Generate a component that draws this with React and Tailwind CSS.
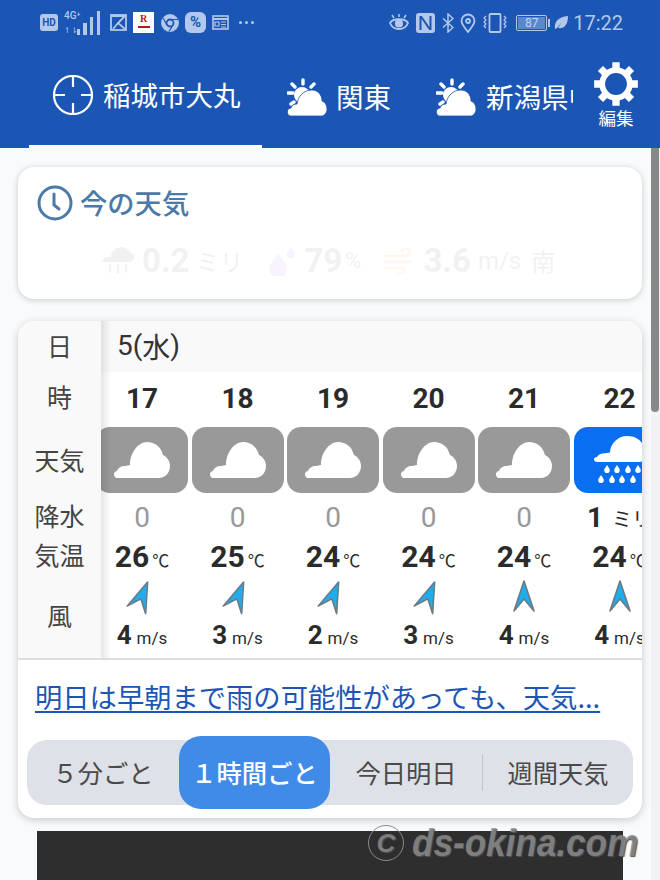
const JP = "font-['Noto_Sans_CJK_JP','Noto_Sans',sans-serif]";

const HOURS = [
  { h: 17, rain: 0, temp: 26, wind: 4, dir: 22 },
  { h: 18, rain: 0, temp: 25, wind: 3, dir: 22 },
  { h: 19, rain: 0, temp: 24, wind: 2, dir: 22 },
  { h: 20, rain: 0, temp: 24, wind: 3, dir: 22 },
  { h: 21, rain: 0, temp: 24, wind: 4, dir: 0 },
  { h: 22, rain: 1, temp: 24, wind: 4, dir: 0, wet: true },
];

const CLOUD_PATH =
  "M4 36a3.500 3.500 0 0 1-1-7c1-3 4-5 8-5l5-1c0-12 8-23 17-23c8 0 14 5 16 13c4 2 7 6 7 11c0 7-5 12-11 12z";

function Crosshair() {
  return (
    <svg width="40" height="40" viewBox="0 0 40 40" fill="none" stroke="white" strokeWidth="2.2" className="shrink-0">
      <circle cx="20" cy="20" r="19" />
      <path d="M20 1v11M20 28v11M1 20h11M28 20h11" />
    </svg>
  );
}

function SunCloud() {
  return (
    <svg width="40" height="38" viewBox="0 0 40 38" fill="white" className="shrink-0">
      <g stroke="white" strokeWidth="3.400" strokeLinecap="round">
        <path d="M16 2v4M5 6l3 3M27 6l-3 3M1 15h5M4 26l3-2" />
      </g>
      <circle cx="15" cy="17" r="8" />
      <path d="M5 38a4 4 0 0 1-1-8c1-3 3-4 6-4c1-8 7-14 15-14c6 0 10 5 10 11c3 1 5 4 5 8c0 4-3 7-5 7z" stroke="#1c56b5" strokeWidth="0.8" />
    </svg>
  );
}

function Gear() {
  return (
    <svg width="46" height="46" viewBox="0 0 24 24" fill="none" className="shrink-0">
      <circle cx="12" cy="12" r="7.200" stroke="white" strokeWidth="3" />
      <g stroke="white" strokeWidth="3.800">
        <path d="M12 .6v4M12 19.400v4M.6 12h4M19.400 12h4M3.900 3.900l2.900 2.900M17.200 17.200l2.900 2.900M20.100 3.900l-2.900 2.900M6.800 17.200l-2.900 2.900" />
      </g>
    </svg>
  );
}

function Cloud() {
  return (
    <svg width="56" height="36" viewBox="0 0 56 36" fill="white" className="shrink-0">
      <path d={CLOUD_PATH} />
    </svg>
  );
}

function RainCloud() {
  return (
    <svg width="56" height="48" viewBox="0 0 56 48" fill="white" className="shrink-0">
      <path d={CLOUD_PATH} transform="scale(1 0.72)" />
      {[13, 23, 34, 44].map((x) => (
        <path key={x} d={`M${x} 29c2 3 2.800 4 2.800 5.200a2.800 2.800 0 0 1-5.600 0c0-1.200.8-2.200 2.800-5.200z`} />
      ))}
      {[7, 18, 28, 39].map((x) => (
        <path key={x} d={`M${x} 39c2 3 2.800 4 2.800 5.200a2.800 2.800 0 0 1-5.600 0c0-1.200.8-2.200 2.800-5.200z`} />
      ))}
    </svg>
  );
}

function WindArrow({ dir }) {
  return (
    <svg width="22" height="32" viewBox="0 0 22 32" className="shrink-0" style={{ transform: `rotate(${dir}deg)` }}>
      <path d="M11 1L21 31L11 19L1 31z" fill="#1eaeee" stroke="#6b7a85" strokeWidth="1.600" strokeLinejoin="round" />
    </svg>
  );
}

function Clock() {
  return (
    <svg width="36" height="36" viewBox="0 0 36 36" fill="none" stroke="#4a7aa8" strokeWidth="3" className="shrink-0" strokeLinecap="round">
      <circle cx="18" cy="18" r="16" />
      <path d="M17 9v11l5 4" />
    </svg>
  );
}

function StatusLeft() {
  const c = "#b3c8ea";
  return (
    <div className="flex items-center">
      <div className="ml-[40px] flex h-[17px] w-[18px] items-center justify-center rounded-[3px] bg-[#b3c8ea] font-['Roboto'] text-[10px] font-bold text-[#1c56b5]">HD</div>
      <div className="ml-[6px] flex w-[14px] flex-col font-['Roboto'] text-[10px] font-medium leading-[10px] text-[#b3c8ea]">
        <span>4G⁺</span>
        <span className="mt-[6px] text-[8px] leading-[8px]">↿⇂</span>
      </div>
      <svg width="24" height="24" viewBox="0 0 24 24" fill={c} className="-ml-[1px]">
        <rect x="0" y="18" width="3" height="6" />
        <rect x="6" y="12" width="4" height="12" />
        <rect x="13" y="6" width="3" height="18" />
        <rect x="20" y="0" width="3" height="24" />
      </svg>
      <svg width="17" height="17" viewBox="0 0 17 17" fill="none" stroke={c} strokeWidth="1.800" className="ml-[9px]">
        <rect x="1" y="1" width="15" height="15" />
        <path d="M2 2h13L8 9l7 6M8 9l-5 6" />
      </svg>
      <div className="ml-[6px] flex h-[21px] w-[21px] flex-col items-center bg-white font-['Liberation_Serif'] text-[10px] font-bold leading-[14px] text-[#b01818]">
        R
        <span className="h-[2px] w-[12px] bg-[#b01818]" />
      </div>
      <svg width="18" height="18" viewBox="0 0 18 18" fill="none" stroke={c} strokeWidth="1.800" className="ml-[7px]">
        <circle cx="9" cy="9" r="8" fill={c} />
        <circle cx="9" cy="9" r="3.500" stroke="#1c56b5" />
        <path d="M9 5.500h8M6 11l-4-7M12 11l-4 6.500" stroke="#1c56b5" strokeWidth="1.200" />
      </svg>
      <div className="ml-[6px] flex h-[21px] w-[21px] items-center justify-center rounded-[6px] bg-[#b3c8ea] font-['Roboto'] text-[15px] font-bold text-[#1c56b5]">%</div>
      <svg width="17" height="15" viewBox="0 0 17 15" fill="none" stroke={c} strokeWidth="1.600" className="ml-[6px]">
        <rect x="1" y="1" width="15" height="13" />
        <path d="M1 4h15" strokeWidth="2" />
        <path d="M3 7h4v4H3zM9 7h5M9 9.500h5M9 12h5" strokeWidth="1.200" />
      </svg>
      <div className="ml-[10px] flex gap-[3px]">
        <span className="h-[3px] w-[3px] rounded-full bg-[#b3c8ea]" />
        <span className="h-[3px] w-[3px] rounded-full bg-[#b3c8ea]" />
        <span className="h-[3px] w-[3px] rounded-full bg-[#b3c8ea]" />
      </div>
    </div>
  );
}

function StatusRight() {
  const c = "#b3c8ea";
  return (
    <div className="flex items-center pr-[37px]">
      <svg width="20" height="18" viewBox="0 0 20 18" fill="none" stroke={c} strokeWidth="1.800">
        <path d="M1 9c3-5 15-5 18 0c-3 8-15 8-18 0z" />
        <circle cx="10" cy="9.500" r="3.200" fill={c} />
        <path d="M3 1l2 3M10 0v3M17 1l-2 3" strokeWidth="1.500" />
      </svg>
      <svg width="19" height="20" viewBox="0 0 19 20" className="ml-[7px]">
        <rect width="19" height="20" rx="3" fill={c} />
        <path d="M4.500 3v14M14.500 3v14M5 3.500l9 13" fill="none" stroke="#1c56b5" strokeWidth="2" />
      </svg>
      <svg width="12" height="20" viewBox="0 0 12 20" fill="none" stroke={c} strokeWidth="1.500" className="ml-[7px]">
        <path d="M1 5.500l10 9L6 19V1l5 4.500L1 14.500" />
      </svg>
      <svg width="16" height="20" viewBox="0 0 16 20" fill="none" stroke={c} strokeWidth="1.800" className="ml-[6px]">
        <path d="M8 19c-4-5-6.500-8-6.500-11a6.500 6.500 0 0 1 13 0c0 3-2.500 6-6.500 11z" />
        <circle cx="8" cy="8" r="2" />
      </svg>
      <svg width="24" height="20" viewBox="0 0 24 20" fill="none" stroke={c} strokeWidth="1.500" className="ml-[7px]">
        <rect x="6.500" y="1" width="11" height="18" rx="1" strokeWidth="1.800" />
        <path d="M3 3l-2 2l2 2l-2 2l2 2l-2 2l2 2M21 3l2 2l-2 2l2 2l-2 2l2 2l-2 2" strokeWidth="1.200" />
      </svg>
      <div className="ml-[9px] flex h-[16px] w-[31px] items-center rounded-[2px] border border-[#b3c8ea] p-[1px]">
        <div className="flex h-full w-full items-center justify-center bg-[#5b87cc] font-['Roboto'] text-[12px] leading-none text-[#c6d6f0]">87</div>
      </div>
      <span className="ml-[1px] h-[8px] w-[2px] bg-[#b3c8ea]" />
      <svg width="14" height="14" viewBox="0 0 14 14" fill={c} className="ml-[4px]">
        <path d="M1 13C0 6 4 1 14 0c0 9-4 13-10 12l4-6l-5 6z" />
      </svg>
      <span className="ml-[5px] font-['Roboto'] text-[20px] leading-none text-[#b3c8ea]">17:22</span>
    </div>
  );
}

function Header() {
  return (
    <div className="flex h-[148px] flex-col bg-[#1c56b5]">
      <div className="flex h-[45px] items-center justify-between">
        <StatusLeft />
        <StatusRight />
      </div>
      <div className="flex flex-1 pl-[29px]">
        <div className={`flex w-[544px] overflow-hidden whitespace-nowrap text-[27.500px] text-white ${JP}`}>
          <div className="flex h-[103px] w-[233px] shrink-0 items-center gap-[10px] border-b-[3px] border-white pl-[24px]">
            <Crosshair />
            <span className="pb-[1px]">稲城市大丸</span>
          </div>
          <div className="flex h-[103px] w-[150px] shrink-0 items-center gap-[9px] pl-[25px]">
            <SunCloud />
            <span>関東</span>
          </div>
          <div className="flex h-[103px] shrink-0 items-center gap-[10px] pl-[24px]">
            <SunCloud />
            <span>新潟県中越</span>
          </div>
        </div>
        <div className="ml-[20px] flex w-[46px] flex-col items-center pt-[16px]">
          <Gear />
          <span className={`mt-[1px] text-[17.500px] leading-[20px] text-white ${JP}`}>編集</span>
        </div>
      </div>
    </div>
  );
}

function NowCard() {
  return (
    <div className="ml-[18px] mr-[9px] mt-[19px] h-[132px] rounded-[16px] bg-white pl-[19px] pt-[18px] shadow-[0_1px_6px_rgba(0,0,0,0.2)]">
      <div className="flex items-center gap-[7px]">
        <Clock />
        <span className={`text-[27.300px] font-medium leading-none text-[#4a7aa8] ${JP}`}>今の天気</span>
      </div>
      <div className="ml-[65px] mt-[15px] flex items-center font-['Roboto'] opacity-[0.05]">
        <svg width="32" height="32" viewBox="0 0 56 48" fill="black" className="mr-[8px]">
          <path d={CLOUD_PATH} transform="scale(1 0.72)" />
          <path d="M14 30v14M28 30v16M42 30v14" stroke="black" strokeWidth="4" />
        </svg>
        <span className="text-[33px] font-bold text-black">0.2</span>
        <span className={`ml-[6px] text-[24px] text-black ${JP}`}>ミリ</span>
        <svg width="30" height="30" viewBox="0 0 30 30" fill="#8a2be2" className="ml-[24px] mr-[7px]">
          <path d="M11 8c6 8 9 11 9 15a9 9 0 0 1-18 0c0-4 3-7 9-15z" />
          <path d="M24 1c3 4 4 5 4 7a4 4 0 0 1-8 0c0-2 1-3 4-7z" />
        </svg>
        <span className="text-[33px] font-bold text-black">79</span>
        <span className="ml-[3px] text-[22px] text-black">%</span>
        <svg width="30" height="26" viewBox="0 0 30 26" fill="none" stroke="#ff9000" strokeWidth="3" className="ml-[23px] mr-[9px]">
          <path d="M0 8h22a4 4 0 1 0-4-4M0 14h28M0 20h18a3 3 0 1 1-3 3" />
        </svg>
        <span className="text-[33px] font-bold text-black">3.6</span>
        <span className="ml-[7px] text-[24px] text-black">m/s</span>
        <span className={`ml-[10px] text-[24px] text-black ${JP}`}>南</span>
      </div>
    </div>
  );
}

function Forecast() {
  return (
    <div className="relative flex min-w-0 flex-1 flex-col overflow-hidden">
      <div className="flex h-[51px] items-center bg-[#f9f9f9] pl-[16px] font-['Roboto'] text-[28px] text-[#333]">
        5(<span className={JP}>水</span>)
      </div>
      <div className="-ml-[5px] flex h-[287px] gap-[3.500px] whitespace-nowrap">
        {HOURS.map((d) => (
          <div key={d.h} className="flex w-[92px] shrink-0 flex-col items-center font-['Roboto'] text-[#2b2b2b]">
            <div className="flex h-[55px] items-center pb-[1px] text-[28px] font-bold leading-none">{d.h}</div>
            <div className={`flex h-[66px] w-[92px] shrink-0 items-center rounded-[14px] ${d.wet ? "justify-start bg-[#0a6ef0] pl-[20px]" : "justify-center bg-[#999999]"}`}>
              {d.wet ? <RainCloud /> : <Cloud />}
            </div>
            <div className="flex h-[48px] items-center pt-[3px] text-[28px] leading-none">
              {d.wet ? (
                <span className="flex items-baseline font-bold">
                  1<span className={`ml-[9px] text-[20px] font-normal ${JP}`}>ミリ</span>
                </span>
              ) : (
                <span className="text-[#999999]">{d.rain}</span>
              )}
            </div>
            <div className="flex h-[32px] items-baseline pt-[1px] leading-none">
              <span className="text-[30px] font-bold">{d.temp}</span>
              <span className={`ml-[3px] text-[17px] ${JP}`}>℃</span>
            </div>
            <div className="mt-[7px] flex h-[33px] items-center">
              <WindArrow dir={d.dir} />
            </div>
            <div className="mt-[9px] flex items-baseline leading-none">
              <span className="text-[26px] font-bold">{d.wind}</span>
              <span className="ml-[5px] text-[17px]">m/s</span>
            </div>
          </div>
        ))}
      </div>
      <div className="absolute bottom-0 left-0 top-0 w-[10px] bg-gradient-to-r from-black/10 to-transparent" />
    </div>
  );
}

function TableCard() {
  const labels = [
    ["日", "h-[49px]"],
    ["時", "h-[54px]"],
    ["天気", "h-[72px]"],
    ["降水", "h-[40px]"],
    ["気温", "h-[39px]"],
    ["風", "h-[84px]"],
  ];
  return (
    <div className="ml-[18px] mr-[9px] mt-[22px] h-[497px] overflow-hidden rounded-[16px] bg-white shadow-[0_2px_8px_rgba(0,0,0,0.2)]">
      <div className="flex h-[339px] border-b-2 border-[#dddddd]">
        <div className={`flex w-[83px] shrink-0 flex-col bg-[#f9f9f9] text-[25px] text-[#444] ${JP}`}>
          {labels.map(([t, h]) => (
            <div key={t} className={`flex items-center justify-center ${h}`}>{t}</div>
          ))}
        </div>
        <Forecast />
      </div>
      <div className={`h-[58px] pl-[17px] pt-[19px] ${JP}`}>
        <span className="text-[27.300px] leading-[34px] text-[#1c56b5] underline decoration-2 underline-offset-[3px]">明日は早朝まで雨の可能性があっても、天気...</span>
      </div>
      <div className={`relative mx-[9px] mt-[22px] flex h-[65px] items-center rounded-[20px] bg-[#dfe1e8] text-[25.300px] text-[#4a4a4a] ${JP}`}>
        <div className="flex w-[152px] justify-center">５分ごと</div>
        <div className="flex h-[73px] w-[151px] items-center justify-center rounded-[22px] bg-[#408ae8] font-medium text-white">１時間ごと</div>
        <div className="flex w-[152px] justify-center">今日明日</div>
        <div className="h-[36px] w-[1px] bg-[#bfc2c9]" />
        <div className="flex flex-1 justify-center">週間天気</div>
      </div>
    </div>
  );
}

export default function App() {
  return (
    <div className="relative flex h-[880px] w-[660px] flex-col overflow-hidden bg-[#f9fafc]">
      <Header />
      <div className="flex flex-1 overflow-hidden">
        <div className="min-w-0 flex-1">
          <NowCard />
          <TableCard />
          <div className="ml-[37px] mr-[28px] mt-[13px] h-[60px] bg-[#2e2e2e]" />
        </div>
        <div className="w-[9px] shrink-0 bg-[#f2f2f5]">
          <div className="h-[264px] w-[8px] rounded-b-[4px] bg-[#888888]" />
        </div>
      </div>
      <div className="absolute left-[368px] top-[823px] flex items-center gap-[8px] font-['Liberation_Sans'] text-[39px] font-bold italic leading-none text-[#8c8c8c]/80 [text-shadow:1px_1px_1px_#555]">
        <span className="flex h-[36px] w-[36px] items-center justify-center rounded-full border border-[#8c8c8c] text-[26px]">C</span>
        <span className="origin-left scale-x-[0.9] whitespace-nowrap">ds-okina.com</span>
      </div>
    </div>
  );
}
